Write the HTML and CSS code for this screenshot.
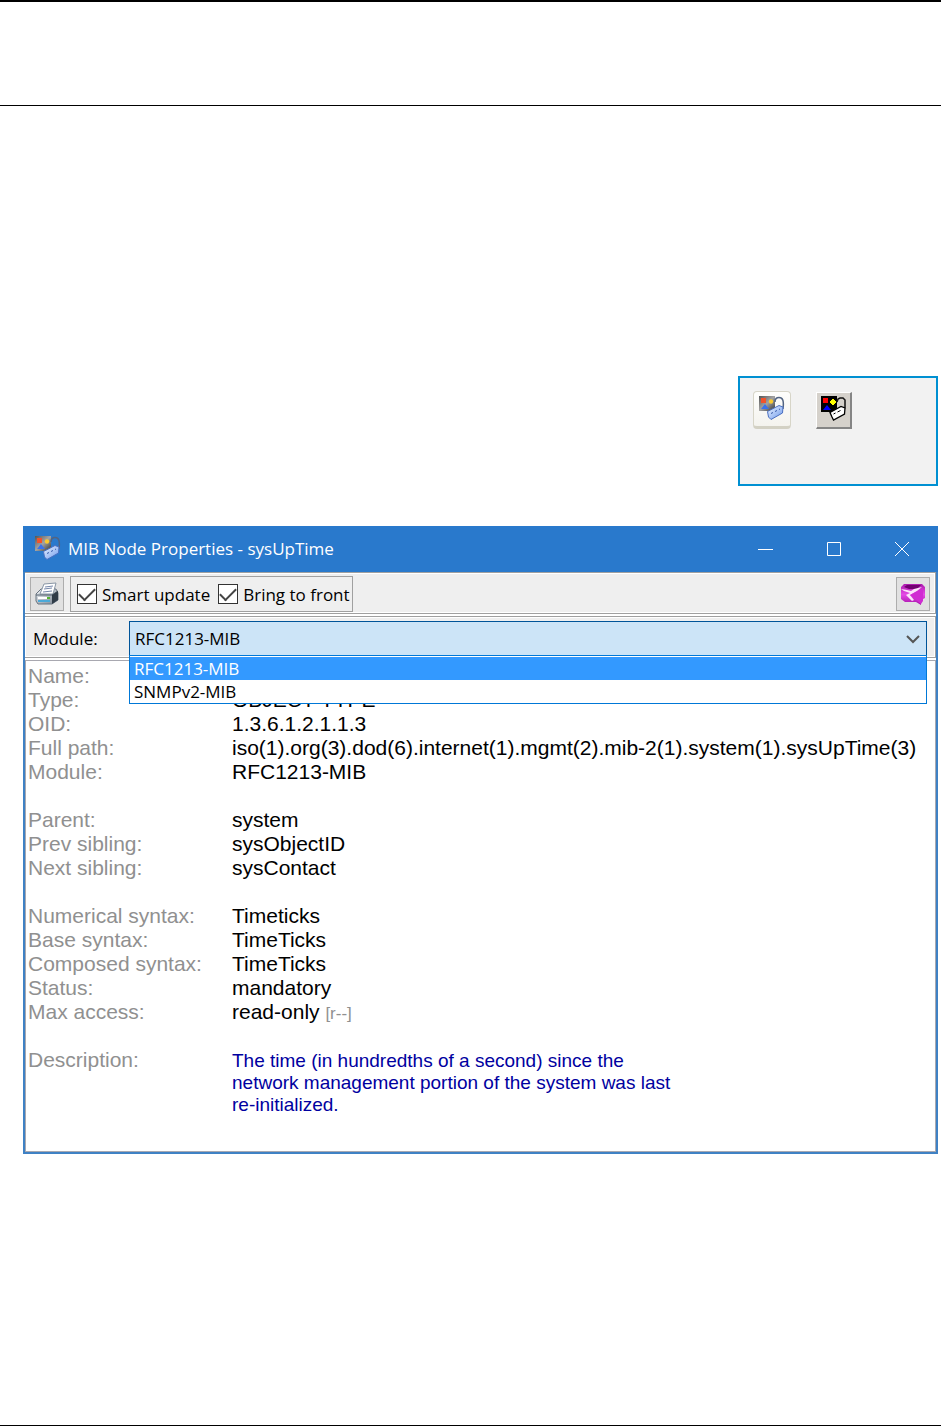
FILE: index.html
```html
<!DOCTYPE html>
<html lang="en">
<head>
<meta charset="utf-8">
<title>MIB Node Properties - sysUpTime</title>
<link rel="stylesheet" href="styles.css">
</head>
<body>
<svg class="defs" aria-hidden="true">
  <linearGradient id="panelFill" x1="0" y1="0" x2="1" y2="1"><stop offset="0" stop-color="#555"/><stop offset=".5" stop-color="#a3a3a3"/><stop offset="1" stop-color="#333"/></linearGradient>
  <linearGradient id="tagFill" x1="0" y1="0" x2="1" y2="1"><stop offset="0" stop-color="#eef5ff"/><stop offset="1" stop-color="#6b98ec"/></linearGradient>
  <linearGradient id="pinkFill" x1="0" y1="0" x2="0" y2="1"><stop offset="0" stop-color="#ac1aae"/><stop offset=".5" stop-color="#e44be5"/><stop offset="1" stop-color="#a510a8"/></linearGradient>
  <linearGradient id="printFill" x1="0" y1="0" x2="1" y2="1"><stop offset="0" stop-color="#f4f7fa"/><stop offset="1" stop-color="#76828f"/></linearGradient>
  <symbol id="node" viewBox="0 0 26 26">
    <path d="M0 1H16V16H0Z" fill="url(#panelFill)"/>
    <path d="M2 3h5v5H2z" fill="#f2532b"/><circle cx="12" cy="6.500" r="2.200" fill="#fac92e"/><path d="M2 14l4-5 4 5z" fill="#3972ed"/>
    <path d="M16 7C16 4 18 2.500 20 2.500C24 2.500 25 6 24 14" fill="none" stroke="#526482" stroke-width="1.500"/>
    <path d="M8.500 16.500L20 10.500L24 12L23.500 18L12 24.500L9.500 22Z" fill="url(#tagFill)" stroke="#4a6fc0"/>
    <path d="M12 18.500l2-1m2-1l2-1m2-1l1-.500" stroke="#395caa" fill="none"/>
  </symbol>
</svg>
<header class="page-head"></header>
<main class="page">
  <aside class="icons-box">
    <button class="tool soft" aria-label="Node properties"><svg width="26" height="26"><use href="#node"/></svg></button>
    <button class="tool classic" aria-label="Node properties, classic"><svg width="26" height="26" viewBox="0 0 26 26">
      <path d="M0 0H16V16H0Z"/><path d="M2 2h5v5H2z" fill="red"/><path d="M10 4h1V3h2v1h1v1h1v2h-1v1h-1v1h-2V8h-1V7H9V5h1z" fill="#ff0"/><path d="M2 14l4-5 4 5z" fill="#00f"/>
      <path d="M16 6l1-3 2-1h3l2 2v7l-1 3" fill="none" stroke="#111" stroke-width="1.500"/>
      <path d="M9 16.500L20 10.500L24 12L23.500 18L12.500 24L11 21Z" fill="#fff" stroke="#000" stroke-width="1.300"/>
      <path d="M12.500 18l2-1m2-1l3-1.500" stroke="#000"/>
    </svg></button>
  </aside>
  <section class="window">
    <div class="titlebar">
      <svg class="app-icon" width="26" height="26"><use href="#node"/></svg>
      <h1>MIB Node Properties - sysUpTime</h1>
      <button aria-label="Minimize"><svg width="16" height="16"><path d="M0 8.500H15"/></svg></button>
      <button aria-label="Maximize"><svg width="16" height="16"><path d="M1.500 1.500H14.500V14.500H1.500Z"/></svg></button>
      <button aria-label="Close"><svg width="16" height="16"><path d="M1 1L15 15M15 1L1 15"/></svg></button>
    </div>
    <div class="toolbar">
      <button class="square" aria-label="Print"><svg width="26" height="26" viewBox="0 0 26 26">
        <path d="M2 13L7 8H22L24 12V19L18 23H4L2 20Z" fill="url(#printFill)" stroke="#697480"/>
        <path d="M6 13L10 3L22 2L19 13Z" fill="#fff" stroke="#8996a5"/><path d="M11 6l8-1M10 8l8-1M9 11l9-1" stroke="#78a"/>
        <path d="M2 14H18L24 10" fill="none" stroke="#53616e"/><path d="M18 14L24 10V19L18 23Z" fill="#303c48"/>
        <path d="M4 17H16" stroke="#fff" stroke-width="2"/><path d="M4 20H16" stroke="#4ba9d8" stroke-width="2"/><path d="M13 17h3" stroke="#55b531" stroke-width="2"/>
      </svg></button>
      <div class="checks">
        <label><input type="checkbox" checked>Smart update</label>
        <label><input type="checkbox" checked>Bring to front</label>
      </div>
      <button class="square last" aria-label="Go back"><svg width="26" height="24" viewBox="0 0 26 24">
        <path d="M4 2H22L25 5V16L21 18V23L16 20H5L1 17V5Z" fill="url(#pinkFill)"/>
        <path d="M4 5L7 3H21L17 7H9Z" fill="#710071"/>
        <path d="M1 7L7 8L11 9L14 7L22 5L17 9L10 13L14 18L12 19L6 13L10 11L4 9Z" fill="#fbe3fa"/>
        <path d="M10 13L23 6V19L21 22Z" fill="#d02cd2"/>
      </svg></button>
    </div>
    <div class="module-row">
      <label for="module">Module:</label>
      <div class="combo">
        <select id="module"><option>RFC1213-MIB</option><option>SNMPv2-MIB</option></select>
        <svg class="chevron" width="14" height="9"><path d="M1 1L7 7L13 1"/></svg>
        <ul class="popup" role="listbox" aria-label="Module">
          <li role="option" aria-selected="true">RFC1213-MIB</li>
          <li role="option" aria-selected="false">SNMPv2-MIB</li>
        </ul>
      </div>
    </div>
    <div class="details">
      <table>
        <tbody>
          <tr><th scope="row">Name:</th><td>sysUpTime</td></tr>
          <tr><th scope="row">Type:</th><td>OBJECT-TYPE</td></tr>
          <tr><th scope="row">OID:</th><td>1.3.6.1.2.1.1.3</td></tr>
          <tr><th scope="row">Full path:</th><td>iso(1).org(3).dod(6).internet(1).mgmt(2).mib-2(1).system(1).sysUpTime(3)</td></tr>
          <tr><th scope="row">Module:</th><td>RFC1213-MIB</td></tr>
        </tbody>
        <tbody>
          <tr class="gap"><th scope="row">Parent:</th><td>system</td></tr>
          <tr><th scope="row">Prev sibling:</th><td>sysObjectID</td></tr>
          <tr><th scope="row">Next sibling:</th><td>sysContact</td></tr>
        </tbody>
        <tbody>
          <tr class="gap"><th scope="row">Numerical syntax:</th><td>Timeticks</td></tr>
          <tr><th scope="row">Base syntax:</th><td>TimeTicks</td></tr>
          <tr><th scope="row">Composed syntax:</th><td>TimeTicks</td></tr>
          <tr><th scope="row">Status:</th><td>mandatory</td></tr>
          <tr><th scope="row">Max access:</th><td>read-only <span class="flags">[r--]</span></td></tr>
        </tbody>
        <tbody>
          <tr class="gap"><th scope="row">Description:</th><td class="desc">The time (in hundredths of a second) since the<br>network management portion of the system was last<br>re-initialized.</td></tr>
        </tbody>
      </table>
    </div>
  </section>
</main>
</body>
</html>
```

FILE: styles.css
```css
* { box-sizing: border-box; }
body {
  margin: 0;
  min-height: 100vh;
  display: flex;
  flex-direction: column;
  background: #fff;
  border-top: 2px solid #000;
  border-bottom: 1px solid #000;
  color: #000;
  font-family: "Open Sans", "Noto Sans", sans-serif;
  font-size: 17px;
}
button { padding: 0; font: inherit; }
.defs { position: absolute; width: 0; height: 0; }
.page-head { height: 104px; border-bottom: 1px solid #000; }
.page {
  display: flex;
  flex-direction: column;
  gap: 40px;
  padding: 270px 3px 0 23px;
}
.icons-box {
  align-self: flex-end;
  display: flex;
  align-items: flex-start;
  gap: 25px;
  width: 200px;
  height: 110px;
  padding: 13px;
  background: #f2f2f2;
  border: 2px solid #0090d2;
}
.tool { display: grid; place-items: center start; width: 38px; height: 38px; }
.tool svg { display: block; }
.soft {
  padding: 0 0 2px 5px;
  background: linear-gradient(#fefefc, #f4f3ee);
  border: 1px solid #d7d5c8;
  border-bottom: 3px solid #d3d1c4;
  border-radius: 4px;
}
.classic {
  width: 36px;
  height: 37px;
  margin-top: 1px;
  padding: 0 0 3px 4px;
  background: #d5d1cb;
  border: 1px solid #fff;
  border-right: 2px solid #858585;
  border-bottom: 2px solid #858585;
}
.window { border: 2px solid #3f81c4; border-top: 0; background: #fff; }
.titlebar {
  display: flex;
  align-items: center;
  height: 46px;
  margin: 0 -2px;
  padding: 0 2px 0 12px;
  background: #2979cc;
  color: #fff;
}
.titlebar h1 {
  flex: 1;
  margin: 0 0 0 7px;
  font-size: 17px;
  line-height: 24px;
  font-weight: 400;
}
.app-icon { margin-bottom: 2px; }
.titlebar button { width: 68px; height: 44px; border: 0; background: none; }
.titlebar button svg { display: block; margin: auto; fill: none; stroke: #fff; }
.toolbar, .module-row {
  display: flex;
  align-items: center;
  height: 42px;
  padding: 2px 5px 0;
  background: #efefef;
  border: 1px solid #a0a0a0;
  border-left: 0;
  box-shadow: inset 0 0 0 1px #fff;
}
.square {
  display: grid;
  place-items: center;
  width: 34px;
  height: 34px;
  background: #e1e1e1;
  border: 1px solid #adadad;
}
.last { margin-left: auto; }
.checks {
  display: flex;
  align-items: center;
  gap: 8px;
  height: 36px;
  margin-left: 6px;
  padding: 0 2px 0 6px;
  border: 1px solid #a0a0a0;
}
.checks label { display: flex; align-items: center; gap: 5px; white-space: nowrap; }
.checks input {
  appearance: none;
  width: 20px;
  height: 20px;
  margin: 0;
  background: #fff;
  border: 1px solid #333;
  display: grid;
  place-items: center;
}
.checks input:checked::before {
  content: "";
  width: 14px;
  height: 7px;
  margin-bottom: 4px;
  border: solid #444;
  border-width: 0 0 2px 2px;
  rotate: -45deg;
}
.module-row { margin-top: 2px; padding: 2px 8px 0; }
.module-row > label { width: 96px; }
.combo { flex: 1; position: relative; height: 35px; }
.combo select {
  appearance: none;
  width: 100%;
  height: 35px;
  padding: 0 5px;
  font: inherit;
  color: #000;
  background: #cce4f7;
  border: 1px solid #005499;
  border-radius: 0;
}
.chevron { position: absolute; right: 7px; top: 14px; fill: none; stroke: #555; stroke-width: 2; pointer-events: none; }
.popup {
  position: absolute;
  top: 34px;
  left: 0;
  right: 0;
  margin: 0;
  padding: 1px 0 0;
  list-style: none;
  background: #fff;
  border: 1px solid #0078d7;
  line-height: 23px;
}
.popup li { padding: 0 4px; }
.popup [aria-selected="true"] { background: #3399ff; color: #fff; }
.details {
  margin-top: 2px;
  min-height: 492px;
  padding: 3px 0 0 2px;
  border: 1px solid #a8a8b0;
}
table { border-collapse: collapse; font: 21px/24px "Liberation Sans", Arial, sans-serif; }
th, td { padding: 0; vertical-align: top; text-align: left; font-weight: 400; white-space: nowrap; }
th { min-width: 204px; color: #909090; }
.gap > * { padding-top: 24px; }
.flags { font-size: 17px; line-height: 17px; color: #909090; }
.gap > .desc { padding-top: 26px; font-size: 19px; line-height: 22px; color: #0000a0; }
```
